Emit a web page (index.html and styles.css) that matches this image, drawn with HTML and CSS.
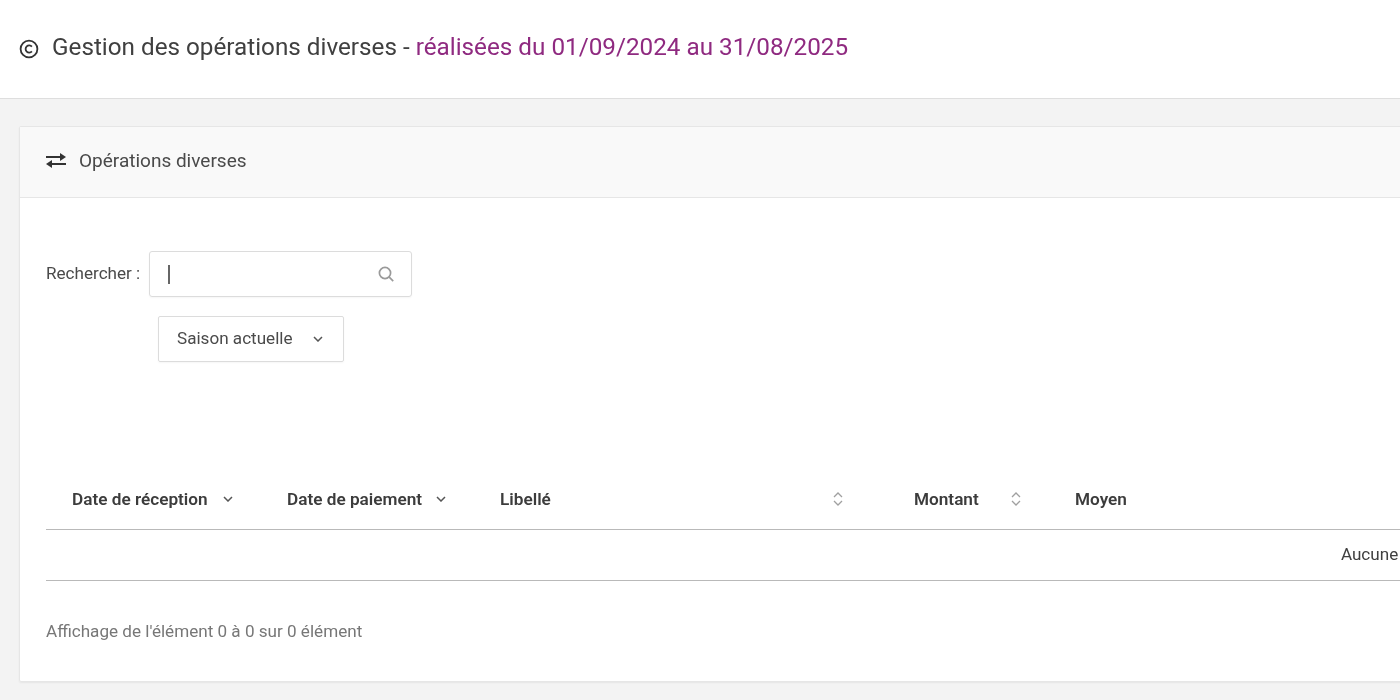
FILE: index.html
```html
<!DOCTYPE html>
<html lang="fr">
<head>
<meta charset="utf-8">
<title>Gestion des opérations diverses</title>
<link rel="stylesheet" href="styles.css">
</head>
<body>
<div class="page">
  <header class="top">
    <svg class="copy-icon" viewBox="0 0 20 20" width="20" height="20" aria-hidden="true"><circle cx="10" cy="10" r="8.4"/><path d="M12.9 7.6A3.6 3.6 0 1 0 12.9 12.4"/></svg>
    <h1 class="title">Gestion des opérations diverses - <span class="accent">réalisées du 01/09/2024 au 31/08/2025</span></h1>
  </header>
  <main class="content">
    <section class="card">
      <div class="card-head">
        <svg class="swap-icon" viewBox="0 0 22 16" width="22" height="16" aria-hidden="true"><path d="M1 5h17"/><path class="solid" d="M15 1l6 4-6 4z"/><path d="M4 12h17"/><path class="solid" d="M7 8l-6 4 6 4z"/></svg>
        <span>Opérations diverses</span>
      </div>
      <div class="card-body">
        <div class="search-row">
          <label class="search-label" for="q">Rechercher :</label>
          <div class="search-box">
            <span class="caret"></span>
            <svg class="search-icon" viewBox="0 0 18 18" width="18" height="18" aria-hidden="true"><circle cx="8" cy="8" r="5.6"/><path d="M12.2 12.2l4 4"/></svg>
          </div>
        </div>
        <div class="filter-row">
          <div class="select">
            <span>Saison actuelle</span>
            <svg class="chev" viewBox="0 0 10 6" width="10" height="6" aria-hidden="true"><path d="M1 1l4 4 4-4"/></svg>
          </div>
        </div>
        <table class="table">
          <colgroup><col class="c1"><col class="c2"><col class="c3"><col class="c4"><col></colgroup>
          <thead>
            <tr>
              <th><div class="th-in"><span>Date de réception</span><svg class="chev" viewBox="0 0 10 6" width="10" height="6" aria-hidden="true"><path d="M1 1l4 4 4-4"/></svg></div></th>
              <th><div class="th-in"><span>Date de paiement</span><svg class="chev" viewBox="0 0 10 6" width="10" height="6" aria-hidden="true"><path d="M1 1l4 4 4-4"/></svg></div></th>
              <th><div class="th-in wide"><span>Libellé</span><svg class="sort" viewBox="0 0 10 14" width="10" height="14" aria-hidden="true"><path d="M1 5l4-4 4 4"/><path d="M1 9l4 4 4-4"/></svg></div></th>
              <th><div class="th-in"><span>Montant</span><svg class="sort" viewBox="0 0 10 14" width="10" height="14" aria-hidden="true"><path d="M1 5l4-4 4 4"/><path d="M1 9l4 4 4-4"/></svg></div></th>
              <th><div class="th-in"><span>Moyen</span></div></th>
            </tr>
          </thead>
          <tbody>
            <tr><td colspan="5">Aucune donnée disponible dans le tableau</td></tr>
          </tbody>
        </table>
        <p class="info">Affichage de l'élément 0 à 0 sur 0 élément</p>
      </div>
    </section>
  </main>
</div>
</body>
</html>
```

FILE: styles.css
```css
html, body {
  margin: 0;
  padding: 0;
  height: 700px;
  overflow: hidden;
  background: #f3f3f3;
}
body {
  font-family: Roboto, "Liberation Sans", sans-serif;
  color: #3f3f3f;
}
.page {
  width: 3002px;
  filter: blur(0.6px);
}
.top {
  height: 98px;
  background: #fff;
  border-bottom: 1px solid #dedede;
  display: flex;
  align-items: center;
  padding-left: 19px;
  gap: 13px;
}
.copy-icon {
  fill: none;
  stroke: #333;
  stroke-width: 1.8;
  flex: none;
}
.title {
  margin: 0;
  font-size: 24.25px;
  font-weight: 400;
  color: #404040;
  position: relative;
  top: -2px;
}
.accent { color: #8f2a80; }
.content {
  padding: 27px 19px 18px;
}
.card {
  background: #fff;
  border: 1px solid #e6e6e6;
  border-radius: 2px;
  box-shadow: 0 1px 2px rgba(0,0,0,.06);
  height: 556px;
  box-sizing: border-box;
}
.card-head {
  background: #f9f9f9;
  border-bottom: 1px solid #e6e6e6;
  display: flex;
  align-items: center;
  padding: 0 0 4px 25px;
  box-sizing: border-box;
  height: 71px;
  gap: 12px;
  font-size: 19px;
  color: #4a4a4a;
}
.swap-icon {
  fill: none;
  stroke: #333;
  stroke-width: 2;
  flex: none;
}
.swap-icon .solid { fill: #333; stroke: none; }
.card-body {
  padding: 53px 0 0 26px;
}
.search-row {
  display: flex;
  align-items: center;
  gap: 9px;
  height: 46px;
}
.search-label {
  font-size: 17.1px;
  color: #4a4a4a;
  position: relative;
  top: -1px;
}
.search-box {
  height: 44px;
  border: 1px solid #dcdcdc;
  border-radius: 3px;
  display: flex;
  align-items: center;
  justify-content: space-between;
  padding: 0 16px 0 18px;
  box-sizing: content-box;
  width: 227px;
  box-shadow: 0 1px 2px rgba(0,0,0,.04);
}
.caret {
  width: 2px;
  height: 19px;
  background: #666;
}
.search-icon {
  fill: none;
  stroke: #9a9a9a;
  stroke-width: 1.7;
}
.filter-row {
  padding: 19px 0 0 112px;
}
.select {
  display: flex;
  align-items: center;
  height: 44px;
  width: 184px;
  box-sizing: content-box;
  border: 1px solid #dcdcdc;
  border-radius: 2px;
  font-size: 17.1px;
  color: #4a4a4a;
  box-shadow: 0 1px 2px rgba(0,0,0,.04);
}
.select span { padding: 0 0 2px 18px; }
.select .chev { margin-left: 20px; }
.chev {
  fill: none;
  stroke: #555;
  stroke-width: 1.5;
  flex: none;
}
.sort {
  fill: none;
  stroke: #a0a0a0;
  stroke-width: 1.3;
  flex: none;
}
.table {
  margin-top: 107px;
  width: 2910px;
  border-collapse: collapse;
  table-layout: fixed;
}
.c1 { width: 215px; }
.c2 { width: 213px; }
.c3 { width: 414px; }
.c4 { width: 161px; }
.table th {
  height: 60px;
  padding: 0;
  border-bottom: 1px solid #b9b9b9;
  font-size: 17.2px;
  font-weight: 600;
  color: #3c3c3c;
  text-align: left;
}
.th-in {
  display: flex;
  align-items: center;
  justify-content: space-between;
  padding: 0 28px 0 26px;
}
.th-in.wide { padding-right: 45px; }
.table td {
  height: 51px;
  padding: 0 0 2px;
  border-bottom: 1px solid #b9b9b9;
  text-align: center;
  font-size: 17.1px;
  color: #404040;
  box-sizing: border-box;
}
.info {
  margin: 40px 0 0;
  font-size: 17.1px;
  color: #777;
}
```
